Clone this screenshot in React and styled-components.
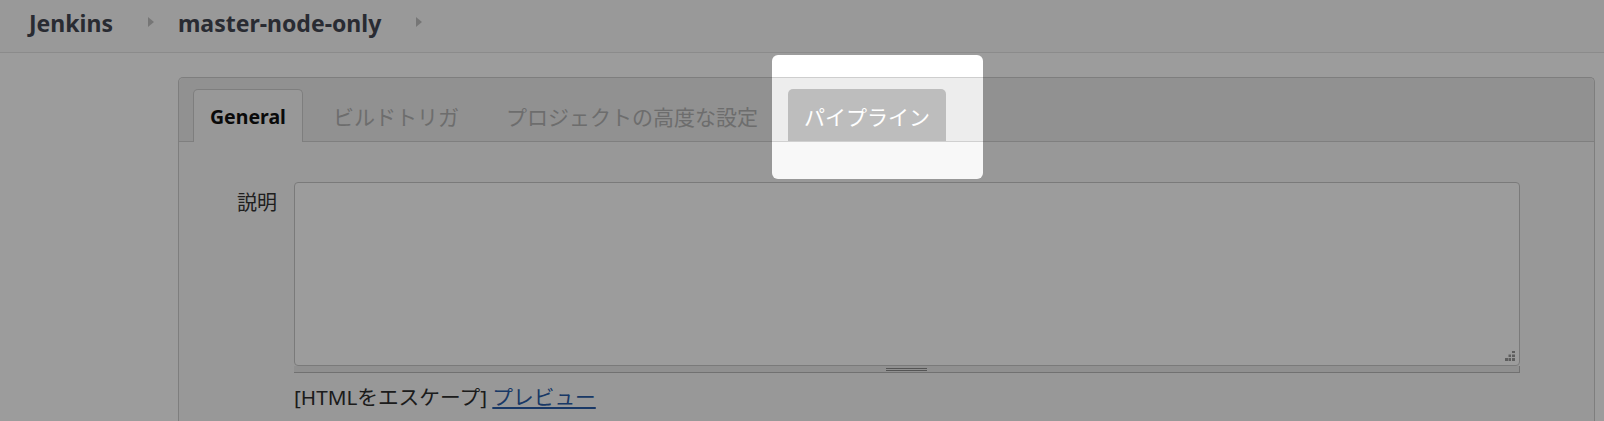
import React from "react";
import styled, { createGlobalStyle } from "styled-components";

const GlobalStyle = createGlobalStyle`
  html, body {
    margin: 0;
    background: #ffffff;
    font-family: "Noto Sans", "Noto Sans CJK JP", sans-serif;
    overflow: hidden;
  }
`;

const Header = styled.header`
  height: 52px;
  display: flex;
  align-items: center;
  padding-left: 29px;
  background: #fafafa;
  border-bottom: 1px solid #e4e4e4;
`;

const Crumb = styled.a`
  font-size: 23px;
  font-weight: 700;
  color: #434752;
  text-decoration: none;
  line-height: 1;
  margin-top: -6px;
`;

const CrumbArrow = styled.span`
  width: 0;
  height: 0;
  border-left: 6px solid #c2c2c2;
  border-top: 5px solid transparent;
  border-bottom: 5px solid transparent;
  margin: -8px 24px 0 35px;
`;

const Main = styled.main`
  padding: 24px 9px 0 178px;
`;

const Panel = styled.section`
  border: 1px solid #cecece;
  border-bottom: none;
  border-radius: 5px 5px 0 0;
  background: #f8f8f8;
  height: 400px;
`;

const TabBar = styled.div`
  display: flex;
  gap: 13px;
  padding: 11px 0 0 14px;
  background: #ededed;
  border-bottom: 1px solid #d0d0d0;
  border-radius: 5px 5px 0 0;
`;

const Tab = styled.div`
  box-sizing: border-box;
  display: flex;
  align-items: center;
  padding: 0 ${(p) => (p.$lit ? "15px" : "16px")};
  font-size: ${(p) => (p.$active ? "19.5px" : "21px")};
  font-weight: ${(p) => (p.$active ? 700 : 400)};
  color: ${(p) => (p.$active ? "#111" : p.$lit ? "#ffffff" : "#b3b3b3")};
  background: ${(p) => (p.$active ? "#f8f8f8" : p.$lit ? "#bdbdbd" : "transparent")};
  border: 1px solid ${(p) => (p.$active ? "#cecece" : "transparent")};
  border-bottom: none;
  border-radius: 5px 5px 0 0;
  margin-bottom: ${(p) => (p.$active ? "-1px" : "0")};
  height: ${(p) => (p.$active ? "53px" : "52px")};
  white-space: nowrap;
`;

const Body = styled.div`
  display: grid;
  grid-template-columns: 98px 1fr;
  column-gap: 17px;
  padding: 40px 74px 0 0;
`;

const Label = styled.label`
  text-align: right;
  font-size: 20px;
  line-height: 28px;
  color: #333;
  padding-top: 7px;
`;

const Field = styled.div`
  display: flex;
  flex-direction: column;
`;

const TextBox = styled.div`
  position: relative;
  height: 184px;
  box-sizing: border-box;
  background: #ffffff;
  border: 1px solid #c8c8c8;
  border-radius: 4px;
`;

const Grip = styled.svg`
  position: absolute;
  right: 4px;
  bottom: 4px;
`;

const Handle = styled.div`
  height: 6px;
  background: #ececec;
  border-bottom: 1px solid #b9b9b9;
  border-right: 1px solid #b9b9b9;
  display: flex;
  justify-content: center;
  align-items: center;
  &::after {
    content: "";
    width: 41px;
    height: 1px;
    border-top: 1px solid #8c8c8c;
    border-bottom: 1px solid #8c8c8c;
  }
`;

const Note = styled.div`
  margin-top: 10px;
  font-size: 20.7px;
  line-height: 28px;
  color: #2e2e2e;
  a {
    color: #2a5ca7;
    text-decoration: underline;
  }
`;

const Spotlight = styled.div`
  position: absolute;
  left: 772px;
  top: 55px;
  width: 211px;
  height: 124px;
  border-radius: 6px;
  box-shadow: 0 0 0 4000px rgba(0, 0, 0, 0.39);
  pointer-events: none;
`;

export default function App() {
  return (
    <>
      <GlobalStyle />
      <Header>
        <Crumb href="#">Jenkins</Crumb>
        <CrumbArrow />
        <Crumb href="#">master-node-only</Crumb>
        <CrumbArrow />
      </Header>
      <Main>
        <Panel>
          <TabBar>
            <Tab $active>General</Tab>
            <Tab>ビルドトリガ</Tab>
            <Tab>プロジェクトの高度な設定</Tab>
            <Tab $lit>パイプライン</Tab>
          </TabBar>
          <Body>
            <Label>説明</Label>
            <Field>
              <TextBox>
                <Grip width="10" height="10" viewBox="0 0 10 10">
                  <g fill="#9a9a9a">
                    <rect x="7" y="0" width="3" height="2" />
                    <rect x="3.5" y="3.5" width="2.5" height="2.5" />
                    <rect x="7" y="3.5" width="3" height="2.5" />
                    <rect x="0" y="7" width="3" height="3" />
                    <rect x="3.5" y="7" width="2.5" height="3" />
                    <rect x="7" y="7" width="3" height="3" />
                  </g>
                </Grip>
              </TextBox>
              <Handle />
              <Note>
                [HTMLをエスケープ] <a href="#">プレビュー</a>
              </Note>
            </Field>
          </Body>
        </Panel>
      </Main>
      <Spotlight />
    </>
  );
}
